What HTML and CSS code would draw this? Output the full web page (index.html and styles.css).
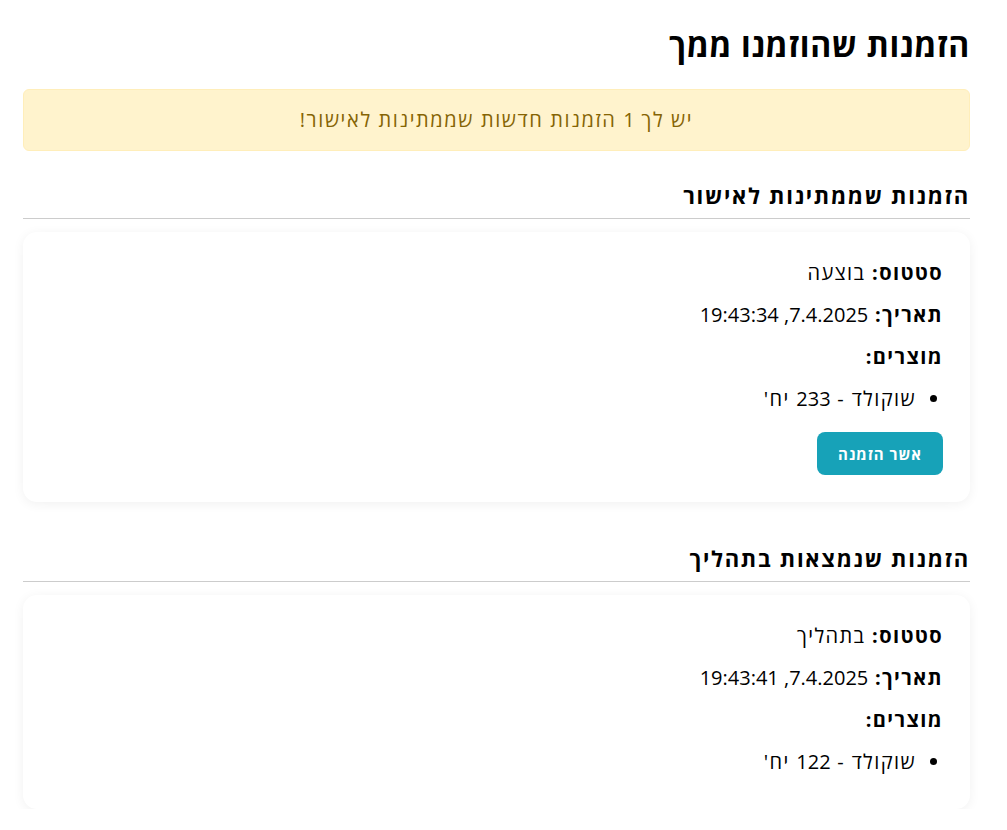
FILE: index.html
```html
<!DOCTYPE html>
<html lang="he" dir="rtl">
<head>
<meta charset="utf-8">
<title>הזמנות</title>
<link rel="stylesheet" href="styles.css">
</head>
<body>
<div class="page">
  <h1 class="title">הזמנות שהוזמנו ממך</h1>
  <div class="alert">יש לך <span class="num">1</span> הזמנות חדשות שממתינות לאישור!</div>

  <h2 class="section-title first">הזמנות שממתינות לאישור</h2>
  <div class="card">
    <p class="row"><strong>סטטוס:</strong> בוצעה</p>
    <p class="row"><strong>תאריך:</strong> <span class="num">7.4.2025, 19:43:34</span></p>
    <p class="row"><strong>מוצרים:</strong></p>
    <ul class="items">
      <li>שוקולד - <span class="num">233</span> יח'</li>
    </ul>
    <button class="btn">אשר הזמנה</button>
  </div>

  <h2 class="section-title">הזמנות שנמצאות בתהליך</h2>
  <div class="card">
    <p class="row"><strong>סטטוס:</strong> בתהליך</p>
    <p class="row"><strong>תאריך:</strong> <span class="num">7.4.2025, 19:43:41</span></p>
    <p class="row"><strong>מוצרים:</strong></p>
    <ul class="items">
      <li>שוקולד - <span class="num">122</span> יח'</li>
    </ul>
  </div>
</div>
</body>
</html>
```

FILE: styles.css
```css
html, body {
  margin: 0;
  padding: 0;
  background: #ffffff;
}

body {
  font-family: "Open Sans", "DejaVu Sans", sans-serif;
  color: #000;
}

.page {
  padding: 25px 37px 0 23px;
}

.num {
  letter-spacing: 0;
}

.title {
  margin: 0;
  font-size: 32px;
  line-height: 40px;
  font-weight: 700;
  letter-spacing: 0.6px;
}

.alert {
  margin-top: 24px;
  background: #fff3cd;
  border: 1px solid #ffeeba;
  color: #856404;
  border-radius: 6px;
  padding: 17px 20px;
  font-size: 20px;
  line-height: 26px;
  letter-spacing: 1.6px;
  text-align: center;
}

.section-title {
  margin: 43px 0 13px;
  padding-bottom: 10px;
  border-bottom: 1px solid #cccccc;
  font-size: 22px;
  line-height: 26px;
  font-weight: 700;
  letter-spacing: 1.7px;
}

.section-title.first {
  margin-top: 31px;
}

.card {
  background: #fff;
  border-radius: 14px;
  box-shadow: 0 2px 12px rgba(0, 0, 0, 0.06);
  padding: 28px 27px 27px;
}

.row {
  margin: 0 0 16px;
  font-size: 20px;
  line-height: 26px;
  letter-spacing: 1.4px;
}

.items {
  margin: 0 0 7px;
  padding: 0 27px 0 0;
  font-size: 20px;
  line-height: 26px;
  letter-spacing: 1.4px;
}

.btn {
  display: block;
  margin-top: 20px;
  background: #17a2b8;
  color: #fff;
  border: none;
  border-radius: 8px;
  height: 43px;
  padding: 0 21px;
  font-family: inherit;
  font-size: 15px;
  font-weight: 700;
  letter-spacing: 1px;
  cursor: pointer;
}
```
